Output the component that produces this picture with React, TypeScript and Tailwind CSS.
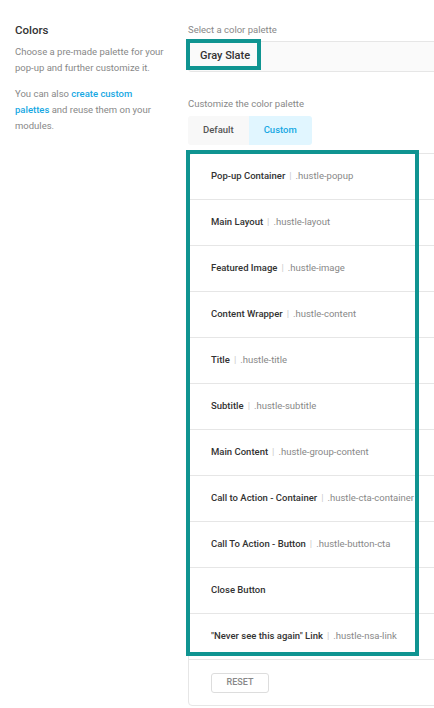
import React from "react";

const rows: { label: string; cls?: string }[] = [
  { label: "Pop-up Container", cls: ".hustle-popup" },
  { label: "Main Layout", cls: ".hustle-layout" },
  { label: "Featured Image", cls: ".hustle-image" },
  { label: "Content Wrapper", cls: ".hustle-content" },
  { label: "Title", cls: ".hustle-title" },
  { label: "Subtitle", cls: ".hustle-subtitle" },
  { label: "Main Content", cls: ".hustle-group-content" },
  { label: "Call to Action - Container", cls: ".hustle-cta-container" },
  { label: "Call To Action - Button", cls: ".hustle-button-cta" },
  { label: "Close Button" },
  { label: "\"Never see this again\" Link", cls: ".hustle-nsa-link" },
];

export default function App() {
  return (
    <div
      className="w-[434px] h-[708px] overflow-hidden bg-white flex pt-[24px]"
      style={{ fontFamily: "Roboto, 'Noto Sans', sans-serif" }}
    >
      {/* Left column */}
      <div className="w-[188px] shrink-0 pl-[15px] pr-[20px]">
        <div className="text-[11.5px] font-medium text-[#333] leading-[12px]">Colors</div>
        <p className="mt-[8px] text-[9.5px] leading-[16px] text-[#888]">
          Choose a pre-made palette for your pop-up and further customize it.
        </p>
        <p className="mt-[10px] text-[9.5px] leading-[16px] text-[#888]">
          You can also{" "}
          <span className="text-[#17a8e3] font-medium">create custom palettes</span>{" "}
          and reuse them on your modules.
        </p>
      </div>

      {/* Right column */}
      <div className="w-[300px] shrink-0">
        <div className="text-[9.5px] leading-[12px] text-[#888]">Select a color palette</div>
        <div className="relative mt-[5px]">
          <div className="h-[31px] border border-[#e6e6e6] bg-[#fafafa] rounded-l-[3px] flex items-center pl-[11px]">
            <span className="text-[11px] font-medium text-[#333]">Gray Slate</span>
          </div>
          <div className="absolute left-[-2px] top-[-2px] w-[75px] h-[31px] border-[4px] border-[#0f9491]" />
        </div>

        <div className="mt-[26px] text-[9.5px] leading-[12px] text-[#888]">Customize the color palette</div>
        <div className="mt-[6px] flex h-[29px]">
          <div className="px-[15px] flex items-center bg-[#f8f8f8] text-[9.5px] font-medium text-[#555] rounded-l-[3px]">
            Default
          </div>
          <div className="px-[15px] flex items-center bg-[#e1f6ff] text-[9.5px] font-medium text-[#17a8e3] rounded-r-[3px]">
            Custom
          </div>
        </div>

        <div className="relative mt-[8px]">
          <div className="border border-[#e6e6e6] rounded-[4px]">
            {rows.map((r) => (
              <div
                key={r.label}
                className="h-[46px] border-b border-[#e6e6e6] flex items-center pl-[22px] text-[9.5px] whitespace-nowrap"
              >
                <span className="font-medium text-[#333]">{r.label}</span>
                {r.cls && (
                  <>
                    <span className="text-[#ccc] mx-[4px]">|</span>
                    <span className="text-[#888]">{r.cls}</span>
                  </>
                )}
              </div>
            ))}
            <div className="h-[45px] flex items-center pl-[22px]">
              <div className="w-[58px] h-[20px] border border-[#ddd] rounded-[3px] flex items-center justify-center text-[9px] font-medium text-[#888]">
                RESET
              </div>
            </div>
          </div>
          <div className="absolute left-[-2px] top-[-3px] w-[233px] h-[506px] border-[4px] border-[#0f9491]" />
        </div>
      </div>
    </div>
  );
}
